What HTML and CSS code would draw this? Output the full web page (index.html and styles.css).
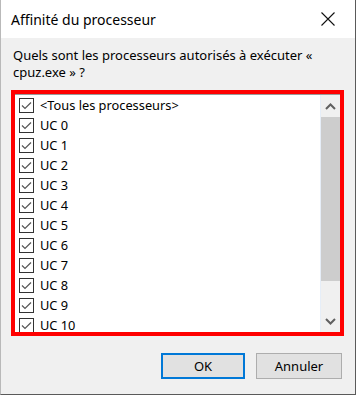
FILE: index.html
```html
<!DOCTYPE html>
<html lang="fr">
<head>
<meta charset="utf-8">
<title>Affinité du processeur</title>
<link rel="stylesheet" href="styles.css">
</head>
<body>
<div class="window">
  <div class="titlebar">
    <span class="title">Affinité du processeur</span>
    <svg class="close" width="14" height="14" viewBox="0 0 14 14"><path d="M0.5 0.5 L13.5 13.5 M13.5 0.5 L0.5 13.5" stroke="#111" stroke-width="1.1" fill="none"/></svg>
  </div>
  <div class="content">
    <p class="prompt">Quels sont les processeurs autorisés à exécuter «<br>cpuz.exe » ?</p>
    <div class="frame">
      <div class="listbox">
        <ul class="items">
          <li class="item"><span class="cb"><svg width="11" height="9" viewBox="0 0 11 9"><path d="M1 4.5 L4 7.5 L10 1.5" stroke="#555" stroke-width="1.2" fill="none"/></svg></span>&lt;Tous les processeurs&gt;</li>
          <li class="item"><span class="cb"><svg width="11" height="9" viewBox="0 0 11 9"><path d="M1 4.5 L4 7.5 L10 1.5" stroke="#555" stroke-width="1.2" fill="none"/></svg></span>UC 0</li>
          <li class="item"><span class="cb"><svg width="11" height="9" viewBox="0 0 11 9"><path d="M1 4.5 L4 7.5 L10 1.5" stroke="#555" stroke-width="1.2" fill="none"/></svg></span>UC 1</li>
          <li class="item"><span class="cb"><svg width="11" height="9" viewBox="0 0 11 9"><path d="M1 4.5 L4 7.5 L10 1.5" stroke="#555" stroke-width="1.2" fill="none"/></svg></span>UC 2</li>
          <li class="item"><span class="cb"><svg width="11" height="9" viewBox="0 0 11 9"><path d="M1 4.5 L4 7.5 L10 1.5" stroke="#555" stroke-width="1.2" fill="none"/></svg></span>UC 3</li>
          <li class="item"><span class="cb"><svg width="11" height="9" viewBox="0 0 11 9"><path d="M1 4.5 L4 7.5 L10 1.5" stroke="#555" stroke-width="1.2" fill="none"/></svg></span>UC 4</li>
          <li class="item"><span class="cb"><svg width="11" height="9" viewBox="0 0 11 9"><path d="M1 4.5 L4 7.5 L10 1.5" stroke="#555" stroke-width="1.2" fill="none"/></svg></span>UC 5</li>
          <li class="item"><span class="cb"><svg width="11" height="9" viewBox="0 0 11 9"><path d="M1 4.5 L4 7.5 L10 1.5" stroke="#555" stroke-width="1.2" fill="none"/></svg></span>UC 6</li>
          <li class="item"><span class="cb"><svg width="11" height="9" viewBox="0 0 11 9"><path d="M1 4.5 L4 7.5 L10 1.5" stroke="#555" stroke-width="1.2" fill="none"/></svg></span>UC 7</li>
          <li class="item"><span class="cb"><svg width="11" height="9" viewBox="0 0 11 9"><path d="M1 4.5 L4 7.5 L10 1.5" stroke="#555" stroke-width="1.2" fill="none"/></svg></span>UC 8</li>
          <li class="item"><span class="cb"><svg width="11" height="9" viewBox="0 0 11 9"><path d="M1 4.5 L4 7.5 L10 1.5" stroke="#555" stroke-width="1.2" fill="none"/></svg></span>UC 9</li>
          <li class="item"><span class="cb"><svg width="11" height="9" viewBox="0 0 11 9"><path d="M1 4.5 L4 7.5 L10 1.5" stroke="#555" stroke-width="1.2" fill="none"/></svg></span>UC 10</li>
        </ul>
        <div class="scrollbar">
          <div class="arrow"><svg width="11" height="7" viewBox="0 0 11 7"><path d="M1 6 L5.5 1.5 L10 6" stroke="#606060" stroke-width="2" fill="none"/></svg></div>
          <div class="thumb"></div>
          <div class="track"></div>
          <div class="arrow"><svg width="11" height="7" viewBox="0 0 11 7"><path d="M1 1 L5.5 5.5 L10 1" stroke="#606060" stroke-width="2" fill="none"/></svg></div>
        </div>
      </div>
    </div>
    <div class="buttons">
      <button class="btn btn-default">OK</button>
      <button class="btn">Annuler</button>
    </div>
  </div>
</div>
</body>
</html>
```
FILE: styles.css
```css
* { box-sizing: border-box; }
html, body { margin: 0; padding: 0; }
body {
  background: #3a3a3a;
  font-family: "Noto Sans", "Open Sans", sans-serif;
  color: #000;
}
.window {
  width: 356px;
  height: 395px;
  background: #f0f0f0;
  border-left: 1px solid #b9b9b9;
  border-right: 1px solid #5a5a5a;
  border-bottom: 1px solid #5a5a5a;
  display: flex;
  flex-direction: column;
}
.titlebar {
  height: 38px;
  background: #fff;
  display: flex;
  align-items: center;
  justify-content: space-between;
  padding: 0 20px 0 10px;
}
.title {
  font-size: 14px;
  color: #000;
}
.close { display: block; }
.content {
  padding: 9px 11px 0 10px;
  flex: 1;
  display: flex;
  flex-direction: column;
}
.prompt {
  margin: 0 0 9px 2px;
  font-size: 13px;
  line-height: 17px;
}
.frame {
  border: 4px solid #ff0000;
  height: 246px;
  width: 333px;
}
.listbox {
  height: 100%;
  background: #fff;
  border-top: 1px solid #9a9a9a;
  display: flex;
  overflow: hidden;
}
.items {
  list-style: none;
  margin: 0;
  padding: 0 0 0 4px;
  flex: 1;
  overflow: hidden;
}
.item {
  height: 20px;
  display: flex;
  align-items: center;
  font-size: 12.8px;
  line-height: 15px;
  white-space: nowrap;
}
.cb {
  width: 15px;
  height: 15px;
  border: 1px solid #333;
  background: #fff;
  display: flex;
  align-items: center;
  justify-content: center;
  margin-right: 6px;
  flex: none;
}
.cb svg { display: block; }
.scrollbar {
  width: 20px;
  background: #f0f0f0;
  border-left: 1px solid #e6eef8;
  display: flex;
  flex-direction: column;
}
.arrow {
  height: 22px;
  display: flex;
  align-items: center;
  justify-content: center;
  flex: none;
}
.thumb {
  height: 164px;
  background: #cdcdcd;
  flex: none;
}
.track { flex: 1; }
.buttons {
  display: flex;
  justify-content: flex-end;
  gap: 11px;
  margin-top: 17px;
  padding-right: 2px;
}
.btn {
  height: 26px;
  background: #e1e1e1;
  border: 1px solid #adadad;
  font-family: "Noto Sans", "Open Sans", sans-serif;
  font-size: 13px;
  color: #000;
  padding: 0;
  width: 86px;
}
.btn-default {
  border: 2px solid #0078d7;
  width: 84px;
}
```
